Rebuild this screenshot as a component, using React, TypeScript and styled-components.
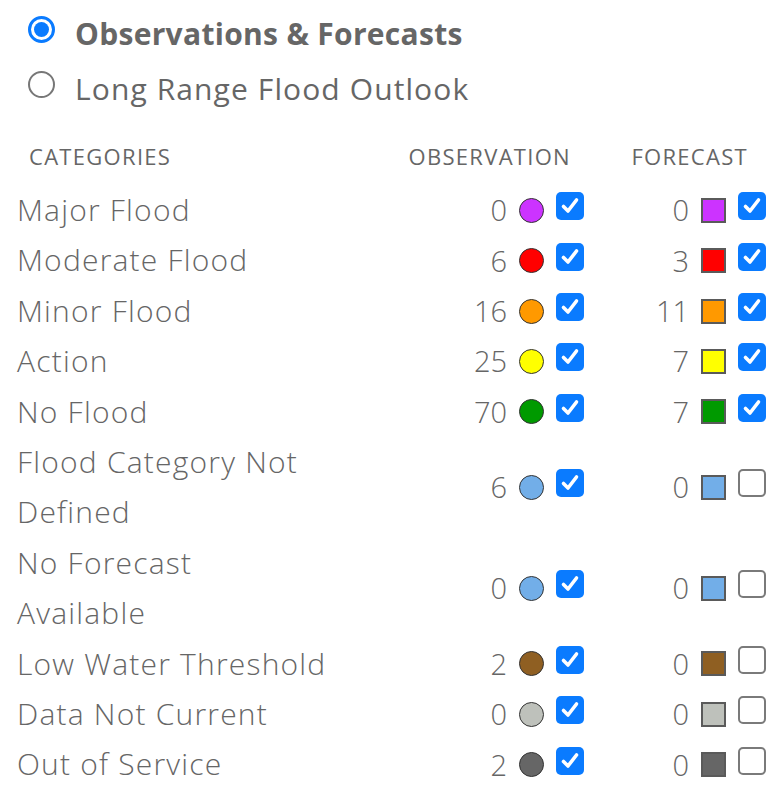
import styled, { createGlobalStyle } from "styled-components";

interface Category {
    name: string;
    color: string;
    obs: number;
    obsOn: boolean;
    fcst: number;
    fcstOn: boolean;
}

const categories: Category[] = [
    { name: "Major Flood", color: "#cc33ff", obs: 0, obsOn: true, fcst: 0, fcstOn: true },
    { name: "Moderate Flood", color: "#ff0000", obs: 6, obsOn: true, fcst: 3, fcstOn: true },
    { name: "Minor Flood", color: "#ff9900", obs: 16, obsOn: true, fcst: 11, fcstOn: true },
    { name: "Action", color: "#ffff00", obs: 25, obsOn: true, fcst: 7, fcstOn: true },
    { name: "No Flood", color: "#009a00", obs: 70, obsOn: true, fcst: 7, fcstOn: true },
    { name: "Flood Category Not\nDefined", color: "#72aee8", obs: 6, obsOn: true, fcst: 0, fcstOn: false },
    { name: "No Forecast\nAvailable", color: "#72aee8", obs: 0, obsOn: true, fcst: 0, fcstOn: false },
    { name: "Low Water Threshold", color: "#8f5f22", obs: 2, obsOn: true, fcst: 0, fcstOn: false },
    { name: "Data Not Current", color: "#bec1bb", obs: 0, obsOn: true, fcst: 0, fcstOn: false },
    { name: "Out of Service", color: "#666666", obs: 2, obsOn: true, fcst: 0, fcstOn: false },
];

const GlobalStyle = createGlobalStyle`
    body {
        margin: 0;
        background: #fff;
        font-family: "Open Sans", "DejaVu Sans", sans-serif;
        color: #666;
    }
`;

const Panel = styled.div`
    width: 781px;
    padding-top: 15px;
`;

const Modes = styled.div`
    display: flex;
    flex-direction: column;
    gap: 27px;
    padding-left: 28px;
`;

const ModeOption = styled.label`
    display: flex;
    align-items: center;
    gap: 20px;
    height: 28px;
`;

const Radio = styled.span<{ checked?: boolean }>`
    width: 27px;
    height: 27px;
    box-sizing: border-box;
    border-radius: 50%;
    display: flex;
    align-items: center;
    justify-content: center;
    border: ${({ checked }) => (checked ? "3px solid #0a7bff" : "2px solid #777")};

    ${({ checked }) => checked && `
        &:after {
            content: "";
            width: 15px;
            height: 15px;
            border-radius: 50%;
            background: #0a7bff;
        }
    `}
`;

const ModeText = styled.span<{ checked?: boolean }>`
    font-size: 30px;
    font-weight: ${({ checked }) => (checked ? 700 : 400)};
    letter-spacing: ${({ checked }) => (checked ? "0.3px" : "1.1px")};
    color: #666;
    margin-top: 8px;
`;

const Table = styled.div`
    display: grid;
    grid-template-columns: 318px 1fr 162px;
    padding-left: 17px;
    margin-top: 40px;
`;

const HeadCell = styled.div<{ pad: number }>`
    font-size: 22px;
    letter-spacing: 1.3px;
    text-transform: uppercase;
    height: 47px;
    line-height: 36px;
    text-align: ${({ pad }) => (pad === 0 ? "left" : "right")};
    padding-left: ${({ pad }) => (pad === 0 ? "12px" : "0")};
    padding-right: ${({ pad }) => pad}px;
`;

const Label = styled.div`
    font-size: 30px;
    letter-spacing: 1.2px;
    line-height: 50.4px;
    font-weight: 300;
    white-space: pre-line;
`;

const Count = styled.div<{ pad: number }>`
    display: flex;
    align-items: center;
    justify-content: flex-end;
    gap: 12px;
    padding-right: ${({ pad }) => pad}px;
    padding-bottom: 8px;
    font-size: 29px;
    line-height: 30px;
    font-weight: 300;
`;

const Num = styled.span`
    margin-top: 8px;
`;

const Dot = styled.span<{ color: string }>`
    width: 25px;
    height: 25px;
    box-sizing: border-box;
    border-radius: 50%;
    background: ${({ color }) => color};
    border: 1px solid #333;
    margin-top: 8px;
`;

const Swatch = styled.span<{ color: string }>`
    width: 25px;
    height: 25px;
    box-sizing: border-box;
    background: ${({ color }) => color};
    border: 2px solid #5a5a5a;
    margin-top: 8px;
`;

const Box = styled.span<{ checked: boolean }>`
    width: 28px;
    height: 28px;
    box-sizing: border-box;
    border-radius: 5px;
    display: flex;
    align-items: center;
    justify-content: center;
    background: ${({ checked }) => (checked ? "#0a7bff" : "#fff")};
    border: ${({ checked }) => (checked ? "none" : "2px solid #7a7a7a")};
`;

const Check = ({ checked }: { checked: boolean }) => (
    <Box checked={checked}>
        {checked && (
            <svg width="20" height="20" viewBox="0 0 20 20">
                <polyline points="3.5,10.5 8,15 16.5,4" fill="none" stroke="#fff" strokeWidth="3.6" strokeLinecap="round" strokeLinejoin="round" />
            </svg>
        )}
    </Box>
);

export default function App() {
    return (
        <Panel>
            <GlobalStyle />
            <Modes>
                <ModeOption>
                    <Radio checked />
                    <ModeText checked>Observations &amp; Forecasts</ModeText>
                </ModeOption>
                <ModeOption>
                    <Radio />
                    <ModeText>Long Range Flood Outlook</ModeText>
                </ModeOption>
            </Modes>
            <Table>
                <HeadCell pad={0}>Categories</HeadCell>
                <HeadCell pad={48}>Observation</HeadCell>
                <HeadCell pad={33}>Forecast</HeadCell>
                {categories.map((c) => (
                    <>
                        <Label key={c.name}>{c.name}</Label>
                        <Count pad={35}>
                            <Num>{c.obs}</Num>
                            <Dot color={c.color} />
                            <Check checked={c.obsOn} />
                        </Count>
                        <Count pad={15}>
                            <Num>{c.fcst}</Num>
                            <Swatch color={c.color} />
                            <Check checked={c.fcstOn} />
                        </Count>
                    </>
                ))}
            </Table>
        </Panel>
    );
}
